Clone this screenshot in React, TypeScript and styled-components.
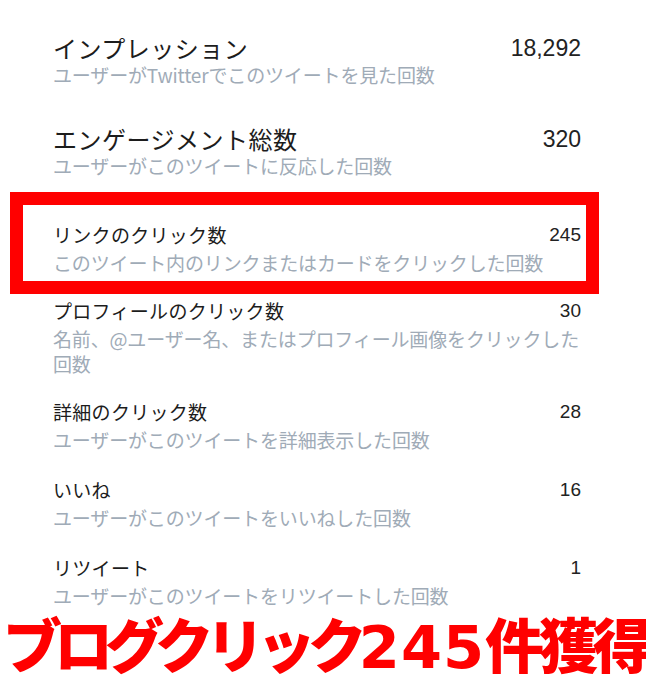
import React from "react";
import styled, { createGlobalStyle } from "styled-components";

type Size = "lg" | "sm";

const Global = createGlobalStyle`
  html, body {
    margin: 0;
    padding: 0;
    background: #ffffff;
  }
  body {
    font-family: "Noto Sans CJK JP", "Noto Sans", sans-serif;
    width: 646px;
    height: 700px;
    overflow: hidden;
  }
`;

const Page = styled.main`
  display: flex;
  flex-direction: column;
  width: 646px;
`;

const List = styled.section`
  display: flex;
  flex-direction: column;
  padding: 34px 65px 0 53px;
`;

const Row = styled.div<{ $mt: number }>`
  display: grid;
  grid-template-columns: 1fr auto;
  column-gap: 12px;
  margin-top: ${(p) => p.$mt}px;
`;

const Title = styled.div<{ $size: Size }>`
  grid-column: 1;
  grid-row: 1;
  color: #1c1c1c;
  font-size: ${(p) => (p.$size === "lg" ? 24 : 19)}px;
  letter-spacing: ${(p) => (p.$size === "lg" ? 0.5 : 0.3)}px;
  line-height: ${(p) => (p.$size === "lg" ? 28 : 30)}px;
  white-space: nowrap;
`;

const Value = styled.div<{ $size: Size }>`
  grid-column: 2;
  grid-row: 1;
  align-self: center;
  font-family: "Liberation Sans", Arial, sans-serif;
  font-size: ${(p) => (p.$size === "lg" ? 23 : 19)}px;
  color: #222222;
  text-align: right;
`;

const Desc = styled.div`
  grid-column: 1 / -1;
  grid-row: 2;
  color: #a0abb7;
  font-size: 19px;
  letter-spacing: -0.15px;
  line-height: 25px;
`;

const Highlight = styled.div`
  margin: 14px -18px 0 -43px;
  border: 13px solid #ff0000;
  padding: 15px 5px 6px 30px;
`;

const Banner = styled.div`
  margin-top: 2px;
  padding-left: 3px;
  height: 66px;
  line-height: 66px;
  font-size: 59px;
  font-weight: 900;
  color: #ff0000;
  white-space: nowrap;
`;

const Part = styled.span<{ $kind: "kana" | "num" | "kanji" }>`
  font-family: ${(p) =>
    p.$kind === "num"
      ? `"DejaVu Sans", "Liberation Sans", sans-serif`
      : `"Noto Sans CJK JP", sans-serif`};
  font-weight: ${(p) => (p.$kind === "num" ? 700 : 900)};
  letter-spacing: ${(p) =>
    p.$kind === "kana" ? -8 : p.$kind === "kanji" ? -5 : 1}px;
`;

type StatProps = {
  title: string;
  value: string;
  desc: string;
  size: Size;
  mt?: number;
};

const Stat = ({ title, value, desc, size, mt = 0 }: StatProps) => (
  <Row $mt={mt}>
    <Title $size={size}>{title}</Title>
    <Value $size={size}>{value}</Value>
    <Desc>{desc}</Desc>
  </Row>
);

export default function App() {
  return (
    <>
      <Global />
      <Page>
        <List>
          <Stat
            size="lg"
            title="インプレッション"
            value="18,292"
            desc="ユーザーがTwitterでこのツイートを見た回数"
          />
          <Stat
            size="lg"
            mt={38}
            title="エンゲージメント総数"
            value="320"
            desc="ユーザーがこのツイートに反応した回数"
          />
          <Highlight>
            <Stat
              size="sm"
              title="リンクのクリック数"
              value="245"
              desc="このツイート内のリンクまたはカードをクリックした回数"
            />
          </Highlight>
          <Stat
            size="sm"
            mt={2}
            title="プロフィールのクリック数"
            value="30"
            desc="名前、@ユーザー名、またはプロフィール画像をクリックした回数"
          />
          <Stat
            size="sm"
            mt={21}
            title="詳細のクリック数"
            value="28"
            desc="ユーザーがこのツイートを詳細表示した回数"
          />
          <Stat
            size="sm"
            mt={23}
            title="いいね"
            value="16"
            desc="ユーザーがこのツイートをいいねした回数"
          />
          <Stat
            size="sm"
            mt={23}
            title="リツイート"
            value="1"
            desc="ユーザーがこのツイートをリツイートした回数"
          />
        </List>
        <Banner>
          <Part $kind="kana">ブログクリック</Part>
          <Part $kind="num">245</Part>
          <Part $kind="kanji">件獲得</Part>
        </Banner>
      </Page>
    </>
  );
}
